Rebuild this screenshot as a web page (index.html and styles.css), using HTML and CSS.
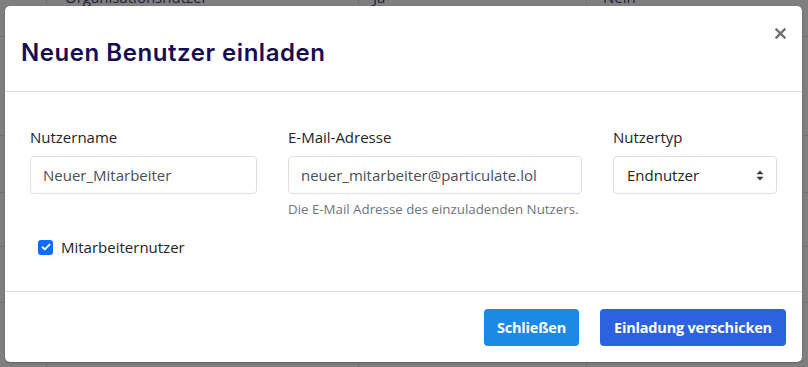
FILE: index.html
```html
<!DOCTYPE html>
<html lang="de">
<head>
    <meta charset="UTF-8">
    <meta name="viewport" content="width=device-width, initial-scale=1.0">
    <title>Neuen Benutzer einladen</title>
    <link rel="stylesheet" href="styles.css">
</head>
<body>
    <div class="backdrop">
        <div class="table-behind">
            <span class="cell c1">Organisationsnutzer</span>
            <span class="cell c2">Ja</span>
            <span class="cell c3">Nein</span>
        </div>
    </div>

    <div class="modal">
        <div class="modal-header">
            <h2 class="modal-title">Neuen Benutzer einladen</h2>
            <button class="close" type="button" aria-label="Close">
                <svg width="11" height="11" viewBox="0 0 11 11">
                    <path d="M1.5 1.5 L9.5 9.5 M9.5 1.5 L1.5 9.5" stroke="#6f6f6f" stroke-width="2.4" stroke-linecap="square"/>
                </svg>
            </button>
        </div>

        <form class="modal-body">
            <div class="form-row">
                <div class="form-group">
                    <label for="username">Nutzername</label>
                    <input type="text" id="username" value="Neuer_Mitarbeiter">
                </div>
                <div class="form-group">
                    <label for="email">E-Mail-Adresse</label>
                    <input type="email" id="email" value="neuer_mitarbeiter@particulate.lol">
                    <small class="help">Die E-Mail Adresse des einzuladenden Nutzers.</small>
                </div>
                <div class="form-group">
                    <label for="usertype">Nutzertyp</label>
                    <div class="select">
                        <span>Endnutzer</span>
                        <svg width="8" height="11" viewBox="0 0 8 11">
                            <path d="M4 0.5 L7.5 4.2 H0.5 Z M4 10.5 L7.5 6.8 H0.5 Z" fill="#343a40"/>
                        </svg>
                    </div>
                </div>
            </div>
            <label class="check">
                <span class="box">
                    <svg width="10" height="8" viewBox="0 0 10 8">
                        <path d="M1.5 4.2 L3.8 6.3 L8.5 1.6" stroke="#fff" stroke-width="1.9" fill="none" stroke-linecap="round" stroke-linejoin="round"/>
                    </svg>
                </span>
                Mitarbeiternutzer
            </label>
        </form>

        <div class="modal-footer">
            <button type="button" class="btn btn-light">Schließen</button>
            <button type="button" class="btn btn-primary">Einladung verschicken</button>
        </div>
    </div>
</body>
</html>
```

FILE: styles.css
```css
body {
    margin: 0;
    padding: 0;
    background-color: #7f7f7f;
    font-family: "Open Sans", "Noto Sans", Arial, sans-serif;
    color: #212529;
    width: 808px;
    height: 367px;
    overflow: hidden;
    position: relative;
}
.backdrop {
    height: 367px;
    background:
        linear-gradient(#727272, #727272) 46px 0 / 1px 100% no-repeat,
        linear-gradient(#727272, #727272) 358px 0 / 1px 100% no-repeat,
        linear-gradient(#727272, #727272) 586px 0 / 1px 100% no-repeat,
        linear-gradient(#727272, #727272) 0 36px / 100% 1px no-repeat,
        linear-gradient(#727272, #727272) 0 135px / 100% 1px no-repeat,
        linear-gradient(#727272, #727272) 0 192px / 100% 1px no-repeat,
        linear-gradient(#727272, #727272) 0 246px / 100% 1px no-repeat,
        linear-gradient(#727272, #727272) 0 302px / 100% 1px no-repeat;
}
.table-behind {
    position: relative;
    height: 6px;
    overflow: hidden;
    font-size: 15px;
    color: #1e1e3a;
}
.cell {
    position: absolute;
    top: -13px;
}
.c1 { left: 65px; }
.c2 { left: 373px; }
.c3 { left: 603px; }

.modal {
    position: absolute;
    left: 5px;
    top: 6px;
    width: 797px;
    height: 356px;
    background-color: #fff;
    border-radius: 5px;
    box-shadow: 0 1px 2px rgba(0, 0, 0, 0.25);
    display: flex;
    flex-direction: column;
}
.modal-header {
    height: 86px;
    box-sizing: border-box;
    border-bottom: 1px solid #dee2e6;
    display: flex;
    justify-content: space-between;
    padding: 0 16px 0 16px;
    position: relative;
}
.modal-title {
    margin: 32px 0 0;
    font-family: "Inter", "Lato", sans-serif;
    font-weight: 600;
    font-size: 24px;
    line-height: 29px;
    color: #170d55;
    letter-spacing: 0.55px;
}
.close {
    border: none;
    background: none;
    padding: 0;
    margin-top: 22px;
    height: 11px;
    width: 11px;
    cursor: pointer;
}
.close svg {
    display: block;
}
.modal-body {
    padding: 35px 25px 0;
    height: 200px;
    box-sizing: border-box;
    border-bottom: 1px solid #dee2e6;
}
.form-row {
    display: grid;
    grid-template-columns: 227px 294px 164px;
    column-gap: 31px;
}
.form-group label {
    display: block;
    font-size: 15px;
    line-height: 20px;
    margin-bottom: 9px;
}
.form-group input,
.select {
    display: block;
    width: 100%;
    height: 38px;
    box-sizing: border-box;
    border: 1px solid #dcdfe3;
    border-radius: 4px;
    padding: 0 12px;
    font-family: inherit;
    font-size: 15px;
    color: #495057;
    background-color: #fff;
}
.select {
    display: flex;
    align-items: center;
    justify-content: space-between;
    color: #212529;
    padding: 0 12px 0 13px;
}
.help {
    display: block;
    margin-top: 6px;
    font-size: 13.3px;
    color: #6c757d;
}
.check {
    display: flex;
    align-items: center;
    gap: 8px;
    margin: 19px 0 0 8px;
    font-size: 15px;
}
.box {
    width: 15px;
    height: 15px;
    border-radius: 3px;
    background-color: #0d6efd;
    display: flex;
    align-items: center;
    justify-content: center;
}
.modal-footer {
    flex: 1;
    display: flex;
    justify-content: flex-end;
    align-items: center;
    gap: 21px;
    padding: 0 16px 0 0;
}
.btn {
    height: 37px;
    border: none;
    border-radius: 4px;
    color: #fff;
    font-family: "Open Sans", "Noto Sans", Arial, sans-serif;
    font-weight: 700;
    font-size: 14.5px;
    letter-spacing: -0.2px;
    white-space: nowrap;
    padding: 0;
    cursor: pointer;
}
.btn-light {
    background-color: #1e88e5;
    width: 95px;
}
.btn-primary {
    background-color: #2c62e0;
    width: 186px;
}
```
